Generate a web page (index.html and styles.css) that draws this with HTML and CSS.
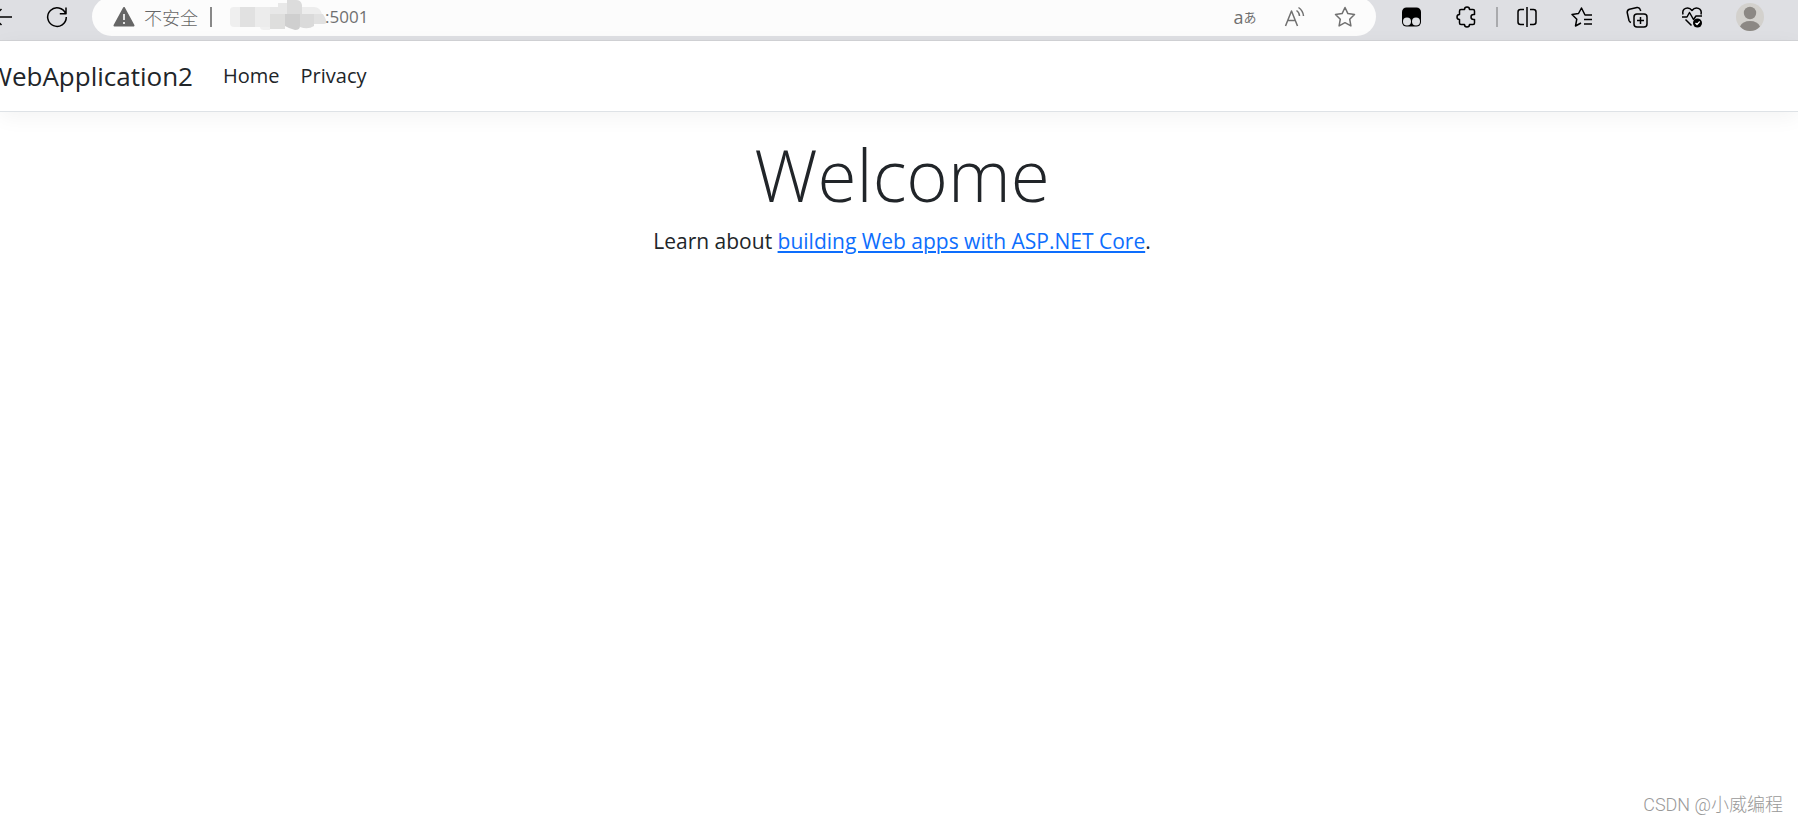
FILE: index.html
```html
<!DOCTYPE html>
<html lang="zh-CN">
<head>
<meta charset="utf-8">
<title>WebApplication2</title>
<link rel="stylesheet" href="styles.css">
</head>
<body>
<div class="toolbar">
  <div class="history">
    <button class="tool tool-back" type="button" aria-label="Back"><svg width="24" height="24" viewBox="0 0 24 24"><path d="M24 12H5.500M13.500 4 5.500 12l8 8"/></svg></button>
    <button class="tool tool-reload" type="button" aria-label="Refresh"><svg width="24" height="24" viewBox="0 0 24 24"><path d="M20.600 8.500A9.300 9.300 0 1 0 21.300 12M21 2.500v6.200h-6.200"/></svg></button>
  </div>
  <div class="address">
    <svg class="warning" width="22" height="22" viewBox="0 0 22 22"><path d="M11 2 20.500 19.500H1.500Z" fill="#666" stroke="#666" stroke-width="2" stroke-linejoin="round"/><path d="M11 8v6M11 16v2" stroke="#fff" stroke-width="1.600"/></svg>
    <span class="insecure">不安全</span>
    <span class="divider"></span>
    <svg class="mosaic" width="97" height="36" viewBox="0 0 97 36">
      <path d="M0 11q0-3 4-3h6v20H4q-4 0-4-4z" fill="#efefef"/>
      <path d="M10 8h15v20H10z" fill="#e1e1e1"/><path d="M25 8h15v20H25z" fill="#ececec"/>
      <path d="M40 8h8V4h9v11H40z" fill="#e8e8e8"/><path d="M57 1h9q5 0 6 5v9H57z" fill="#dcdcdc"/>
      <path d="M72 8h12q6 0 8 7H72z" fill="#ededed"/><path d="M40 15h15v15H40z" fill="#dededd"/>
      <path d="M55 15h15v12q0 4-5 4l-6-2-4-2z" fill="#cfcfcf"/><path d="M70 15h14v12q-6 4-14 1z" fill="#dadada"/>
      <path d="M84 15h9q6 10 1 10H84z" fill="#e1e1e1"/><path d="M30 28h10v3h-6q-4 0-4-3z" fill="#f0f0f0"/>
    </svg>
    <input class="url" type="text" value=":5001" aria-label="Address">
    <button class="tool page-tool" type="button" aria-label="Translate"><span class="latin-a">a</span><span class="kana-a">あ</span></button>
    <button class="tool page-tool" type="button" aria-label="Read aloud"><svg width="24" height="24" viewBox="0 0 24 24"><path d="m2.500 21 6-15 6 15M4.600 15.500h7.800M13.500 5.500q3 2 3 5.500M15.500 2.500q4.500 3 5 8.500"/></svg></button>
    <button class="tool page-tool" type="button" aria-label="Add to favorites"><svg width="24" height="24" viewBox="0 0 24 24"><path d="m12 2.500 2.900 6.100 6.600.9-4.800 4.700 1.200 6.700L12 17.700l-5.900 3.200 1.200-6.700-4.800-4.700 6.600-.9z"/></svg></button>
  </div>
  <div class="extensions">
    <button class="tool" type="button" aria-label="Extension"><svg width="24" height="24" viewBox="0 0 24 24"><rect x="2" y="2.500" width="19" height="19" rx="4.500" fill="#000" stroke="none"/><circle cx="7" cy="16.500" r="4" fill="#dfe0e3" stroke="none"/><circle cx="16" cy="16.500" r="4" fill="#dfe0e3" stroke="none"/></svg></button>
    <button class="tool" type="button" aria-label="Extensions"><svg width="24" height="24" viewBox="0 0 24 24"><path d="M6 4.500h3.500a2.500 2.500 0 0 1 5 0H18q1.500 0 1.500 1.500v3.500h-1a2.500 2.500 0 0 0 0 5h1V18q0 1.500-1.500 1.500h-3.500a2.500 2.500 0 0 1-5 0H6q-1.500 0-1.500-1.500v-3.500a2.500 2.500 0 0 1 0-5V6q0-1.500 1.500-1.500z"/></svg></button>
    <span class="separator"></span>
    <button class="tool" type="button" aria-label="Split screen"><svg width="24" height="24" viewBox="0 0 24 24"><path d="M9 4.500H5.500q-2.500 0-2.500 2.500v10q0 2.500 2.500 2.500H9M15 4.500h3.500q2.500 0 2.500 2.500v10q0 2.500-2.500 2.500H15M12 2v20"/></svg></button>
    <button class="tool" type="button" aria-label="Favorites"><svg width="24" height="24" viewBox="0 0 24 24"><path d="M22 10h-7L11.500 3 8.500 8.500l-6.500 1 4.800 4.700L5.500 21l5.500-3M14 14.500h8M14 19h8"/></svg></button>
    <button class="tool" type="button" aria-label="Collections"><svg width="24" height="24" viewBox="0 0 24 24"><rect x="9" y="9" width="13" height="13" rx="3"/><path d="M15.500 12v7M12 15.500h7M6 17.500q-1.500-.5-2-2L2.200 7.500Q2 5 4.500 4.200L12 2.500q2.500-.3 3.200 2l.5 1.500"/></svg></button>
    <button class="tool" type="button" aria-label="Browser essentials"><svg width="24" height="24" viewBox="0 0 24 24"><path d="M3 9.500C1.500 3 8.500 1 12 5.500 15.500 1 22.500 3 21 9.500M2 12h5l2.500-4.500 4 7L16 11h6M5.500 14.500l6 6"/><circle cx="17.500" cy="18" r="4.500" fill="#000" stroke="none"/><path d="m15.500 18 1.500 1.500 2.700-3" stroke="#fff" stroke-width="1.200"/></svg></button>
    <button class="tool tool-profile" type="button" aria-label="Profile"><svg width="28" height="28" viewBox="0 0 28 28"><circle cx="14" cy="14" r="14" fill="#d3d1cd"/><circle cx="14" cy="10" r="6.200" fill="#8c8884"/><path d="M4 23.500q2.500-5.500 10-5.500t10 5.500Q20 28 14 28T4 23.500z" fill="#8c8884"/></svg></button>
  </div>
</div>
<header class="navbar">
  <a class="brand" href="#">WebApplication2</a>
  <nav class="links"><a href="#">Home</a><a href="#">Privacy</a></nav>
</header>
<main class="content">
  <h1 class="title">Welcome</h1>
  <p class="lead">Learn about <a href="#">building Web apps with ASP.NET Core</a>.</p>
</main>
<footer class="watermark">CSDN @小威编程</footer>
</body>
</html>
```
FILE: styles.css
```css
* { box-sizing: border-box; }
body {
  margin: 0;
  min-height: 100vh;
  display: flex;
  flex-direction: column;
  overflow-x: hidden;
  background: #fff;
  color: #212529;
  font-family: "Open Sans", "Noto Sans CJK SC", sans-serif;
}
.toolbar {
  display: flex;
  height: 41px;
  padding-right: 17px;
  overflow: hidden;
  background: #dedfe3;
  border-bottom: 1px solid #d2d3d6;
}
.history { display: flex; width: 92px; height: 34px; }
.tool {
  display: flex;
  align-items: center;
  justify-content: center;
  flex: none;
  width: 55px;
  height: 34px;
  padding: 0;
  border: 0;
  background: none;
  color: #000;
}
.tool svg { flex: none; fill: none; stroke: currentColor; stroke-width: 1.5; stroke-linejoin: round; }
.tool-back { width: 34px; margin-left: -17px; }
.tool-reload { width: 46px; margin-left: 17px; }
.address {
  display: flex;
  align-items: center;
  flex: 1;
  height: 39px;
  margin-top: -3px;
  padding: 0 6px 0 21px;
  border-radius: 20px;
  background: #fcfcfc;
  color: #666;
  font-size: 18px;
}
.insecure { margin-left: 9px; font-family: "Noto Sans CJK SC", sans-serif; font-weight: 300; line-height: 24px; }
.divider { width: 2px; height: 20px; margin: 0 18px 0 12px; background: #888; }
.mosaic { flex: none; margin-right: -2px; }
.url {
  flex: 1;
  min-width: 0;
  padding: 0;
  border: 0;
  outline: 0;
  background: none;
  color: #707070;
  font-family: "Open Sans", sans-serif;
  font-size: 17px;
}
.page-tool { width: 50px; color: #707070; }
.latin-a { font-family: "Open Sans", sans-serif; font-size: 18px; line-height: 24px; }
.kana-a { font-family: "Noto Sans CJK JP", sans-serif; font-size: 13px; line-height: 24px; }
.extensions { display: flex; padding-left: 8px; }
.separator { width: 2px; height: 20px; margin: 7px 1px 0 2px; background: #a9aaad; }
.tool-profile { width: 62px; }
.tool-profile svg { stroke: none; }
.navbar {
  display: flex;
  align-items: center;
  height: 71px;
  padding-bottom: 1px;
  border-bottom: 1px solid #dee2e6;
  background: #fff;
  box-shadow: 0 5px 20px rgba(0, 0, 0, 0.05);
}
.navbar a { color: #212529; text-decoration: none; }
.navbar .brand {
  display: flex;
  justify-content: flex-end;
  width: 193px;
  font-size: 26px;
  line-height: 40px;
}
.links { display: flex; gap: 21px; margin-left: 30px; font-size: 20px; line-height: 32px; }
.content { flex: 1; padding: 19px 0 0 6px; text-align: center; }
.title { margin: 0; font-size: 71px; font-weight: 300; line-height: 88px; }
.lead { margin: 5px 0 0; font-size: 21px; line-height: 34px; }
.lead a { color: #0d6efd; text-decoration-thickness: 2px; text-underline-offset: 2px; }
.watermark {
  padding: 0 15px 4px 0;
  color: #999;
  font-family: Roboto, "Noto Sans CJK SC", sans-serif;
  font-size: 18px;
  font-weight: 300;
  line-height: 26px;
  text-align: right;
}
```
